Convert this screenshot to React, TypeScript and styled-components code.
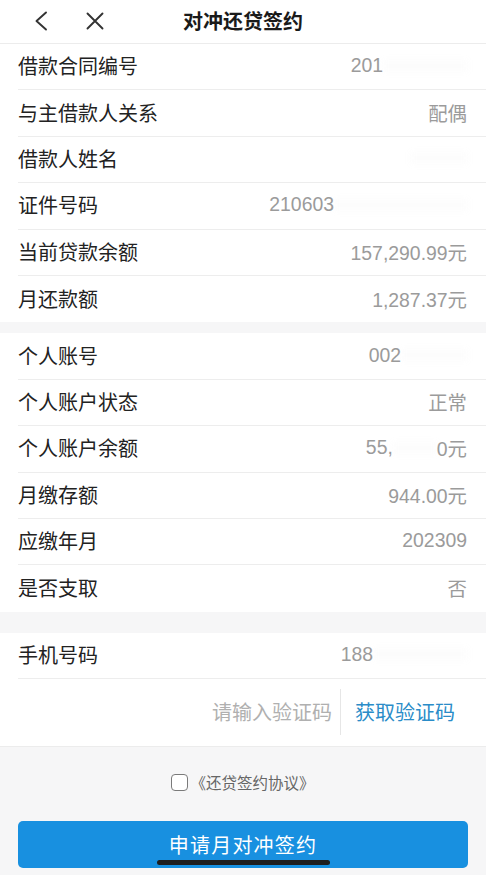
import React from "react";
import styled, { createGlobalStyle } from "styled-components";

const GlobalStyle = createGlobalStyle`
  html, body { margin: 0; padding: 0; }
  body {
    background: #f6f6f7;
    font-family: "Liberation Sans", "Noto Sans CJK SC", sans-serif;
    -webkit-font-smoothing: antialiased;
  }
  * { box-sizing: border-box; }
`;

const Page = styled.div`
  width: 486px;
  min-height: 875px;
  background: #f6f6f7;
  display: flex;
  flex-direction: column;
`;

const Header = styled.header`
  height: 44px;
  background: #fff;
  border-bottom: 1px solid #ececec;
  display: grid;
  grid-template-columns: 1fr auto 1fr;
  align-items: center;
  padding-bottom: 2px;
`;

const NavIcons = styled.div`
  display: flex;
  align-items: center;
  gap: 34px;
  padding-left: 31px;
`;

const IconBtn = styled.button`
  border: 0;
  background: none;
  padding: 0;
  width: 20px;
  height: 22px;
  display: flex;
  align-items: center;
  justify-content: center;
  color: #333;
`;

const Title = styled.h1`
  margin: 0;
  font-size: 20px;
  font-weight: 700;
  color: #1a1a1a;
  font-family: "Noto Sans CJK SC", sans-serif;
`;

const Section = styled.section<{ $gap: number }>`
  background: #fff;
  margin-top: ${(p) => p.$gap}px;
`;

const Row = styled.div<{ $h?: number }>`
  margin-left: 18px;
  height: ${(p) => p.$h ?? 46.4}px;
  padding-right: 19px;
  padding-bottom: 2px;
  display: flex;
  align-items: center;
  justify-content: space-between;
  border-bottom: 1px solid #ededed;
  &:last-child { border-bottom: 0; }
`;

const Label = styled.span`
  font-size: 20px;
  color: #222;
  font-family: "Noto Sans CJK SC", sans-serif;
`;

const Value = styled.span`
  font-size: 19.4px;
  color: #9b9b9b;
  font-family: "Liberation Sans", "Noto Sans CJK SC", sans-serif;
  display: flex;
  align-items: center;
`;

const Redact = styled.span<{ $w: number }>`
  display: inline-block;
  width: ${(p) => p.$w}px;
  height: 12px;
  background: rgba(190, 190, 190, 0.05);
  filter: blur(3px);
`;

const CodeRow = styled.div`
  margin-left: 18px;
  height: 67px;
  padding-bottom: 2px;
  display: flex;
  align-items: center;
`;

const CodeInput = styled.input`
  flex: 1;
  min-width: 0;
  border: 0;
  outline: none;
  background: transparent;
  text-align: right;
  font-size: 20px;
  font-family: "Noto Sans CJK SC", sans-serif;
  color: #333;
  padding: 0;
  &::placeholder { color: #b0b0b0; }
`;

const VDivider = styled.span`
  flex-shrink: 0;
  width: 1px;
  height: 46px;
  background: #e6e6e6;
  margin: 0 14px 0 8px;
`;

const CodeButton = styled.button`
  flex-shrink: 0;
  border: 0;
  background: none;
  padding: 0;
  margin-right: 31px;
  font-size: 20px;
  font-family: "Noto Sans CJK SC", sans-serif;
  color: #2a8cc8;
`;

const Footer = styled.div`
  border-top: 1px solid #ececec;
  display: flex;
  flex-direction: column;
  align-items: center;
  padding: 25px 18px 0;
`;

const Agree = styled.label`
  display: flex;
  align-items: center;
  gap: 2px;
  font-size: 15.5px;
  color: #666;
  font-family: "Noto Sans CJK SC", sans-serif;
  height: 20px;
`;

const Box = styled.span`
  flex-shrink: 0;
  width: 17px;
  height: 17px;
  border: 1.6px solid #7a7a7a;
  border-radius: 4px;
  background: #fff;
`;

const Submit = styled.button`
  margin-top: 29px;
  width: 100%;
  height: 47px;
  border: 0;
  border-radius: 5px;
  background: #1890e0;
  color: #fff;
  font-size: 20px;
  letter-spacing: 1.2px;
  font-family: "Noto Sans CJK SC", sans-serif;
  padding-bottom: 2px;
`;

const HomeIndicator = styled.div`
  position: fixed;
  left: 157px;
  top: 860px;
  width: 173px;
  height: 5px;
  border-radius: 3px;
  background: #1e1e1e;
`;

type Item = { label: string; value: React.ReactNode };

const sec1: Item[] = [
  { label: "借款合同编号", value: <>201<Redact $w={84} /></> },
  { label: "与主借款人关系", value: "配偶" },
  { label: "借款人姓名", value: <Redact $w={56} /> },
  { label: "证件号码", value: <>210603<Redact $w={133} /></> },
  { label: "当前贷款余额", value: "157,290.99元" },
  { label: "月还款额", value: "1,287.37元" },
];

const sec2: Item[] = [
  { label: "个人账号", value: <>002<Redact $w={66} /></> },
  { label: "个人账户状态", value: "正常" },
  { label: "个人账户余额", value: <>55,<Redact $w={44} />0元</> },
  { label: "月缴存额", value: "944.00元" },
  { label: "应缴年月", value: "202309" },
  { label: "是否支取", value: "否" },
];

export default function App() {
  return (
    <Page>
      <GlobalStyle />
      <Header>
        <NavIcons>
          <IconBtn aria-label="back">
            <svg width="14" height="20" viewBox="0 0 14 20" fill="none">
              <path d="M12 1.5 L2.5 10 L12 18.5" stroke="#333" strokeWidth="1.9" strokeLinecap="round" strokeLinejoin="round" />
            </svg>
          </IconBtn>
          <IconBtn aria-label="close">
            <svg width="18" height="18" viewBox="0 0 18 18" fill="none">
              <path d="M1.5 1.5 L16.5 16.5 M16.5 1.5 L1.5 16.5" stroke="#333" strokeWidth="1.9" strokeLinecap="round" />
            </svg>
          </IconBtn>
        </NavIcons>
        <Title>对冲还贷签约</Title>
        <div />
      </Header>

      <Section $gap={0}>
        {sec1.map((it) => (
          <Row key={it.label}>
            <Label>{it.label}</Label>
            <Value>{it.value}</Value>
          </Row>
        ))}
      </Section>

      <Section $gap={11}>
        {sec2.map((it) => (
          <Row key={it.label}>
            <Label>{it.label}</Label>
            <Value>{it.value}</Value>
          </Row>
        ))}
      </Section>

      <Section $gap={21}>
        <Row>
          <Label>手机号码</Label>
          <Value>188<Redact $w={94} /></Value>
        </Row>
        <CodeRow>
          <CodeInput placeholder="请输入验证码" />
          <VDivider />
          <CodeButton>获取验证码</CodeButton>
        </CodeRow>
      </Section>

      <Footer>
        <Agree>
          <Box />
          《还贷签约协议》
        </Agree>
        <Submit>申请月对冲签约</Submit>
      </Footer>
      <HomeIndicator />
    </Page>
  );
}
